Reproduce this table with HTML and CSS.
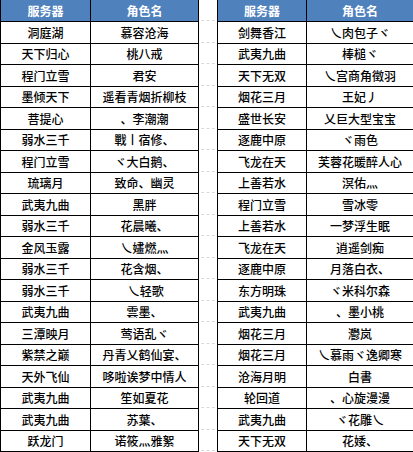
FILE: index.html
```html
<!DOCTYPE html>
<html lang="zh-CN">
<head>
<meta charset="utf-8">
<link rel="stylesheet" href="styles.css">
</head>
<body>
<div class="sheet">
  <table class="grid grid-left">
    <colgroup><col class="c1"><col class="c2"></colgroup>
    <thead><tr><th>服务器</th><th>角色名</th></tr></thead>
    <tbody>
      <tr><td>洞庭湖</td><td>慕容沧海</td></tr>
      <tr><td>天下归心</td><td>桃八戒</td></tr>
      <tr><td>程门立雪</td><td>君安</td></tr>
      <tr><td>墨倾天下</td><td>遥看青烟折柳枝</td></tr>
      <tr><td>菩提心</td><td>、李潮潮</td></tr>
      <tr><td>弱水三千</td><td>戰丨宿修、</td></tr>
      <tr><td>程门立雪</td><td>ヾ大白鹅、</td></tr>
      <tr><td>琉璃月</td><td>致命、幽灵</td></tr>
      <tr><td>武夷九曲</td><td>黑胖</td></tr>
      <tr><td>弱水三千</td><td>花晨曦、</td></tr>
      <tr><td>金风玉露</td><td>乀嫿燃灬</td></tr>
      <tr><td>弱水三千</td><td>花含烟、</td></tr>
      <tr><td>弱水三千</td><td>&nbsp;乀轻歌</td></tr>
      <tr><td>武夷九曲</td><td>雲墨、</td></tr>
      <tr><td>三潭映月</td><td>莺语乱ヾ</td></tr>
      <tr><td>紫禁之巅</td><td>丹青乂鹤仙宴、</td></tr>
      <tr><td>天外飞仙</td><td>哆啦诶梦中情人</td></tr>
      <tr><td>武夷九曲</td><td>笙如夏花</td></tr>
      <tr><td>武夷九曲</td><td>苏葉、</td></tr>
      <tr><td>跃龙门</td><td>诺筱灬雅絮</td></tr>
    </tbody>
  </table>
  <div class="gap">
    <div class="gl gl-head"></div>
    <div class="gl"></div><div class="gl"></div><div class="gl"></div><div class="gl"></div><div class="gl"></div>
    <div class="gl"></div><div class="gl"></div><div class="gl"></div><div class="gl"></div><div class="gl"></div>
    <div class="gl"></div><div class="gl"></div><div class="gl"></div><div class="gl"></div><div class="gl"></div>
    <div class="gl"></div><div class="gl"></div><div class="gl"></div><div class="gl"></div><div class="gl"></div>
  </div>
  <table class="grid grid-right">
    <colgroup><col class="c1"><col class="c2"></colgroup>
    <thead><tr><th>服务器</th><th>角色名</th></tr></thead>
    <tbody>
      <tr><td>剑舞香江</td><td>乀肉包子ヾ</td></tr>
      <tr><td>武夷九曲</td><td>棒槌ヾ</td></tr>
      <tr><td>天下无双</td><td>乀宫商角徵羽</td></tr>
      <tr><td>烟花三月</td><td>王妃丿</td></tr>
      <tr><td>盛世长安</td><td>乂巨大型宝宝</td></tr>
      <tr><td>逐鹿中原</td><td>ヾ雨色</td></tr>
      <tr><td>飞龙在天</td><td>芙蓉花暖醉人心</td></tr>
      <tr><td>上善若水</td><td>溟佑灬</td></tr>
      <tr><td>程门立雪</td><td>雪冰零</td></tr>
      <tr><td>上善若水</td><td>一梦浮生眠</td></tr>
      <tr><td>飞龙在天</td><td>逍遥剑痴</td></tr>
      <tr><td>逐鹿中原</td><td>月落白衣、</td></tr>
      <tr><td>东方明珠</td><td>ヾ米科尔森</td></tr>
      <tr><td>武夷九曲</td><td>、墨小桃</td></tr>
      <tr><td>烟花三月</td><td>灪岚</td></tr>
      <tr><td>烟花三月</td><td>乀慕雨ヾ逸卿寒</td></tr>
      <tr><td>沧海月明</td><td>白書</td></tr>
      <tr><td>轮回道</td><td>、心旋漫漫</td></tr>
      <tr><td>武夷九曲</td><td>ヾ花雕乀</td></tr>
      <tr><td>天下无双</td><td>花婑、</td></tr>
    </tbody>
  </table>
</div>
</body>
</html>
```

FILE: styles.css
```css
html, body {
  margin: 0;
  padding: 0;
  background: #fff;
}

.sheet {
  display: flex;
  align-items: flex-start;
  width: 413px;
  height: 452px;
  overflow: hidden;
  font-family: "Noto Sans CJK SC", "Microsoft YaHei", sans-serif;
  font-size: 12px;
  font-weight: 500;
  color: #000;
}

.grid {
  border-collapse: collapse;
  table-layout: fixed;
  flex: none;
}

.grid-left { width: 198px; }
.grid-left .c1 { width: 90px; }
.grid-left .c2 { width: 108px; }

.grid-right { width: 196px; }
.grid-right .c1 { width: 89px; }
.grid-right .c2 { width: 107px; }

.grid th,
.grid td {
  border: 1px solid #000;
  padding: 0;
  text-align: center;
  vertical-align: middle;
  line-height: 14px;
  white-space: nowrap;
  overflow: hidden;
}

.grid th {
  background: #4f81bd;
  color: #fff;
  font-weight: bold;
  border-top: none;
  height: 21px;
}

.grid tbody tr:nth-child(odd) td { height: 21px; }
.grid tbody tr:nth-child(even) td { height: 20px; }

.gap {
  flex: none;
  width: 18px;
  display: flex;
  flex-direction: column;
}

.gl {
  height: 20.5px;
  border-bottom: 1px dashed #dadada;
  margin: 0 2px;
}

.gl-head { height: 20px; }
```
